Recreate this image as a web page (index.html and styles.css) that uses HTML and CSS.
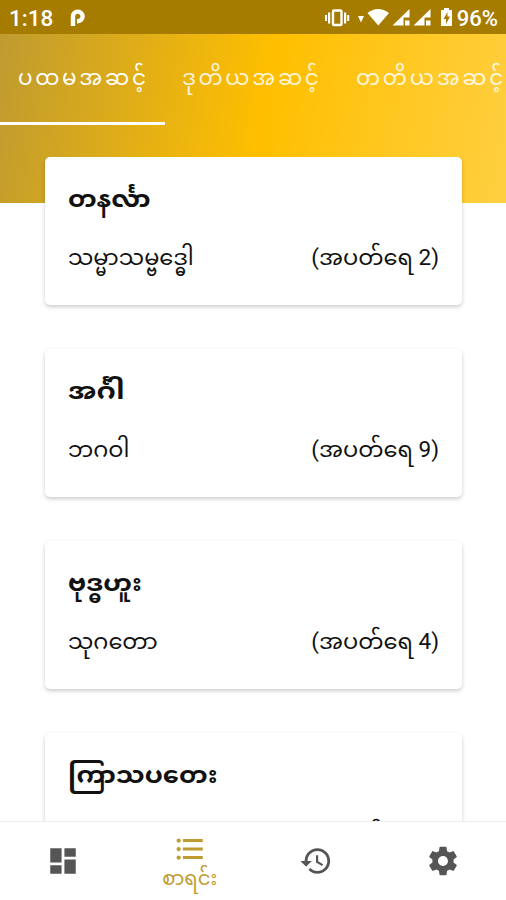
FILE: index.html
```html
<!DOCTYPE html>
<html lang="my">
<head>
    <meta charset="UTF-8">
    <meta name="viewport" content="width=device-width, initial-scale=1.0">
    <title>စာရင်း</title>
    <link rel="stylesheet" href="styles.css">
</head>
<body>
    <div class="app">
        <div class="statusbar">
            <span class="clock">1:18</span>
            <svg class="p-icon" width="15" height="18" viewBox="0 0 15 18"><path d="M3 17V7.500a4.800 4.800 0 1 1 4.800 4.700H7" fill="none" stroke="#fff" stroke-width="4.400"/></svg>
            <svg class="system-icons" width="128" height="22" viewBox="0 0 128 22" fill="#fff">
                <rect x="8" y="3.500" width="8.500" height="14.500" rx="1" fill="none" stroke="#fff" stroke-width="2.400"/>
                <path d="M0 8h2v6H0zM3 5.500h2.200v11H3zM19 5.500h2.200v11H19zM22.200 8h2v6h-2z"/>
                <path d="M33 9h6l-3 6.500z"/>
                <path d="M42.500 6Q53-2 64 6L53.300 18.500z"/>
                <path d="M67.500 18.500L84.500 2v8.500h-6v8zM80 13.500h4.500v5H80z"/>
                <path d="M88.500 18.500L105.500 2v8.500h-6v8zM101 13.500h4.500v5H101z"/>
                <path fill-rule="evenodd" d="M116 3h3V1h5v2h3v16h-11zM122.500 5l-4 7h2.500v5l4-7.500h-2.500z"/>
            </svg>
            <span class="battery">96%</span>
        </div>

        <div class="header">
            <div class="tabs">
                <div class="tab active">ပထမအဆင့်</div>
                <div class="tab">ဒုတိယအဆင့်</div>
                <div class="tab">တတိယအဆင့်</div>
            </div>
        </div>

        <div class="list">
            <div class="card">
                <h2>တနင်္လာ</h2>
                <div class="row"><span>သမ္မာသမ္ဗဒ္ဓေါ</span><span class="count">(အပတ်ရေ 2)</span></div>
            </div>
            <div class="card">
                <h2 class="wide">အင်္ဂါ</h2>
                <div class="row"><span>ဘဂဝါ</span><span class="count">(အပတ်ရေ 9)</span></div>
            </div>
            <div class="card">
                <h2>ဗုဒ္ဓဟူး</h2>
                <div class="row"><span>သုဂတော</span><span class="count">(အပတ်ရေ 4)</span></div>
            </div>
            <div class="card">
                <h2>ကြာသပတေး</h2>
                <div class="row"><span></span><span class="count">(အပတ်ရေ 6)</span></div>
            </div>
        </div>

        <div class="bottom-nav">
            <div class="nav-item">
                <svg width="34" height="34" viewBox="0 0 24 24"><path d="M3 13h8V3H3v10zm0 8h8v-6H3v6zm10 0h8V11h-8v10zm0-18v6h8V3h-8z"/></svg>
            </div>
            <div class="nav-item active">
                <svg width="34" height="34" viewBox="0 0 24 24"><path d="M4 10.500c-.83 0-1.500.67-1.500 1.500s.67 1.500 1.500 1.500 1.500-.67 1.500-1.500-.67-1.500-1.500-1.500zm0-6c-.83 0-1.500.67-1.500 1.500S3.170 7.500 4 7.500 5.500 6.830 5.500 6 4.830 4.500 4 4.500zm0 12c-.83 0-1.500.68-1.500 1.500s.68 1.500 1.500 1.500 1.500-.68 1.500-1.500-.67-1.500-1.500-1.500zM7 19h14v-2H7v2zm0-6h14v-2H7v2zm0-8v2h14V5H7z"/></svg>
                <span>စာရင်း</span>
            </div>
            <div class="nav-item">
                <svg width="34" height="34" viewBox="0 0 24 24"><path d="M13 3c-4.970 0-9 4.030-9 9H1l3.890 3.890.07.14L9 12H6c0-3.870 3.130-7 7-7s7 3.130 7 7-3.130 7-7 7c-1.930 0-3.680-.79-4.940-2.060l-1.420 1.420C8.270 19.990 10.510 21 13 21c4.970 0 9-4.030 9-9s-4.030-9-9-9zm-1 5v5l4.280 2.540.72-1.210-3.500-2.080V8H12z"/></svg>
            </div>
            <div class="nav-item">
                <svg width="34" height="34" viewBox="0 0 24 24"><path d="M19.430 12.980c.04-.32.07-.64.07-.98s-.03-.66-.07-.98l2.110-1.650c.19-.15.24-.42.12-.64l-2-3.460c-.12-.22-.39-.3-.61-.22l-2.490 1c-.52-.4-1.080-.73-1.690-.98l-.38-2.650C14.460 2.180 14.250 2 14 2h-4c-.25 0-.46.18-.49.42l-.38 2.650c-.61.25-1.170.59-1.690.98l-2.490-1c-.23-.09-.49 0-.61.22l-2 3.460c-.13.22-.07.49.12.64l2.110 1.650c-.04.32-.07.65-.07.98s.03.66.07.98l-2.110 1.650c-.19.15-.24.42-.12.64l2 3.460c.12.22.39.3.61.22l2.490-1c.52.4 1.080.73 1.690.98l.38 2.650c.03.24.24.42.49.42h4c.25 0 .46-.18.49-.42l.38-2.650c.61-.25 1.170-.59 1.690-.98l2.490 1c.23.09.49 0 .61-.22l2-3.460c.12-.22.07-.49-.12-.64l-2.110-1.650zM12 15.500c-1.930 0-3.500-1.570-3.500-3.500s1.570-3.500 3.500-3.500 3.500 1.570 3.500 3.500-1.570 3.500-3.500 3.500z"/></svg>
            </div>
        </div>
    </div>
</body>
</html>
```

FILE: styles.css
```css
* {
    box-sizing: border-box;
}
body {
    margin: 0;
    background-color: #fff;
    font-family: Roboto, "Noto Sans Myanmar", "Noto Sans", sans-serif;
    color: #111;
}
.app {
    display: flex;
    flex-direction: column;
    height: 900px;
    overflow: hidden;
}
.statusbar {
    display: flex;
    align-items: center;
    flex: none;
    height: 34px;
    padding: 2px 8px 0 9px;
    background-color: #a67c00;
    color: #fff;
    font-size: 22.5px;
    font-weight: 500;
}
.p-icon {
    margin-left: 17px;
}
.system-icons {
    margin-left: auto;
}
.battery {
    margin-left: 4px;
    font-size: 22px;
}
.header {
    flex: none;
    height: 169px;
    background: linear-gradient(100deg, #bf9b30 0%, #ffbf00 52%, #ffcf40 100%);
}
.tabs {
    display: flex;
    height: 91px;
    overflow: hidden;
}
.tab {
    flex: none;
    height: 91px;
    padding-left: 17px;
    line-height: 88px;
    white-space: nowrap;
    color: rgba(255,255,255,0.85);
    font-size: 21.5px;
    letter-spacing: 2.7px;
}
.tab.active {
    width: 165px;
    padding-left: 18px;
    color: #fff;
    border-bottom: 3px solid #fff;
}
.tab + .tab {
    width: 174px;
}
.list {
    flex: 1;
    min-height: 0;
    margin-top: -46px;
    padding: 0 44px 0 45px;
    overflow: hidden;
}
.card {
    height: 148px;
    margin-bottom: 44px;
    padding: 23px 23px;
    background: white;
    border-radius: 5px;
    box-shadow: 0 2px 4px rgba(0,0,0,0.2);
}
.card h2 {
    margin: 0 0 17px;
    height: 40px;
    line-height: 40px;
    font-size: 23px;
    font-weight: bold;
    transform: scaleX(1.125);
    transform-origin: left;
}
.card h2.wide {
    transform: scaleX(1.22);
}
.row {
    display: flex;
    justify-content: space-between;
    height: 40px;
    line-height: 40px;
    font-size: 22.5px;
    white-space: nowrap;
}
.bottom-nav {
    display: grid;
    grid-template-columns: repeat(4, 1fr);
    flex: none;
    height: 79px;
    background: white;
    border-top: 1px solid #eee;
}
.nav-item {
    display: flex;
    flex-direction: column;
    align-items: center;
    justify-content: center;
}
.nav-item svg {
    fill: #555;
}
.nav-item.active {
    padding-top: 1px;
    color: #bf9b30;
    font-size: 19.5px;
}
.nav-item.active span {
    height: 25px;
    line-height: 25px;
}
.nav-item.active svg {
    fill: #bf9b30;
}
```
